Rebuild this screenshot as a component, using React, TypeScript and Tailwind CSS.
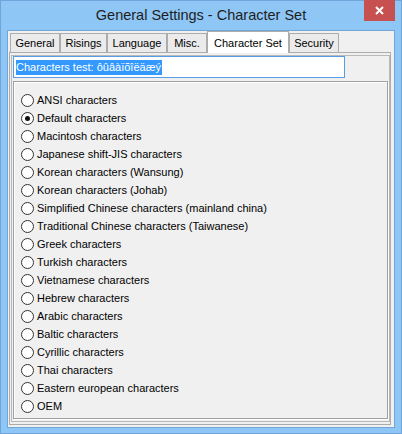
import React from "react";

const items = [
  "ANSI characters",
  "Default characters",
  "Macintosh characters",
  "Japanese shift-JIS characters",
  "Korean characters (Wansung)",
  "Korean characters (Johab)",
  "Simplified Chinese characters (mainland china)",
  "Traditional Chinese characters (Taiwanese)",
  "Greek characters",
  "Turkish characters",
  "Vietnamese characters",
  "Hebrew characters",
  "Arabic characters",
  "Baltic characters",
  "Cyrillic characters",
  "Thai characters",
  "Eastern european characters",
  "OEM",
];

function Radio({ checked }: { checked?: boolean }) {
  return (
    <span className="w-[13px] h-[13px] rounded-full border border-[#333333] bg-white flex items-center justify-center shrink-0">
      {checked && <span className="w-[5px] h-[5px] rounded-full bg-[#111]" />}
    </span>
  );
}

function Tab({ label, w, selected }: { label: string; w: string; selected?: boolean }) {
  if (selected) {
    return (
      <div
        className={`${w} h-[22px] -mb-[1px] relative z-10 bg-white border-t border-l border-r border-[#acacac] flex items-start justify-center pt-[3px]`}
      >
        {label}
      </div>
    );
  }
  return (
    <div
      className={`${w} h-[19px] bg-[#ebebeb] border-t border-l border-r border-[#acacac] flex items-center justify-center pt-[1px]`}
    >
      {label}
    </div>
  );
}

export default function App() {
  return (
    <div
      className="w-[402px] h-[434px] bg-[#8ec6f6] border border-[#6fa5da] flex flex-col text-[11px] text-black"
      style={{ fontFamily: '"Liberation Sans", Arial, sans-serif' }}
    >
      <div className="relative h-[29px] flex items-center justify-center shrink-0">
        <span className="text-[14.5px] text-[#1e1e1e]">General Settings - Character Set</span>
        <div className="absolute right-[6px] -top-[1px] w-[31px] h-[21px] bg-[#c75050] flex items-center justify-center">
          <svg width="9" height="9" viewBox="0 0 9 9">
            <path d="M1 1 L8 8 M8 1 L1 8" stroke="white" strokeWidth="2" />
          </svg>
        </div>
      </div>
      <div className="ml-[6px] w-[388px] h-[398px] border border-[#72a6d9] bg-[#f0f0f0] flex flex-col shrink-0">
        <div className="h-[21px] flex items-end pl-[2px] shrink-0">
          <Tab label="General" w="w-[50px]" />
          <Tab label="Risings" w="w-[47px]" />
          <Tab label="Language" w="w-[60px]" />
          <Tab label="Misc." w="w-[40px]" />
          <Tab label="Character Set" w="w-[82px]" selected />
          <Tab label="Security" w="w-[50px]" />
        </div>
        <div className="ml-[1px] w-[382px] h-[373px] border border-[#acacac] bg-[#f0f0f0] shrink-0">
          <div className="ml-[1px] mt-[2px] w-[379px] h-[367px] border border-[#b9b9b9] flex flex-col">
            <div className="ml-[1px] w-[332px] h-[22px] border border-[#569de5] bg-white flex items-center pl-[2px] shrink-0">
              <span className="bg-[#3399ff] text-white leading-[15px] px-[0px] pr-[1px]">
                Characters test: ôûâàïõîëäæý
              </span>
            </div>
            <div className="ml-[1px] mt-[3px] w-[375px] h-[338px] border border-[#a0a0a0] shadow-[1px_1px_0_#ffffff,inset_1px_1px_0_#ffffff] pt-[9px] pl-[7px] shrink-0">
              {items.map((t, i) => (
                <div key={t} className="h-[18px] flex items-center gap-[3px]">
                  <Radio checked={i === 1} />
                  <span className="whitespace-nowrap">{t}</span>
                </div>
              ))}
            </div>
          </div>
        </div>
      </div>
    </div>
  );
}
